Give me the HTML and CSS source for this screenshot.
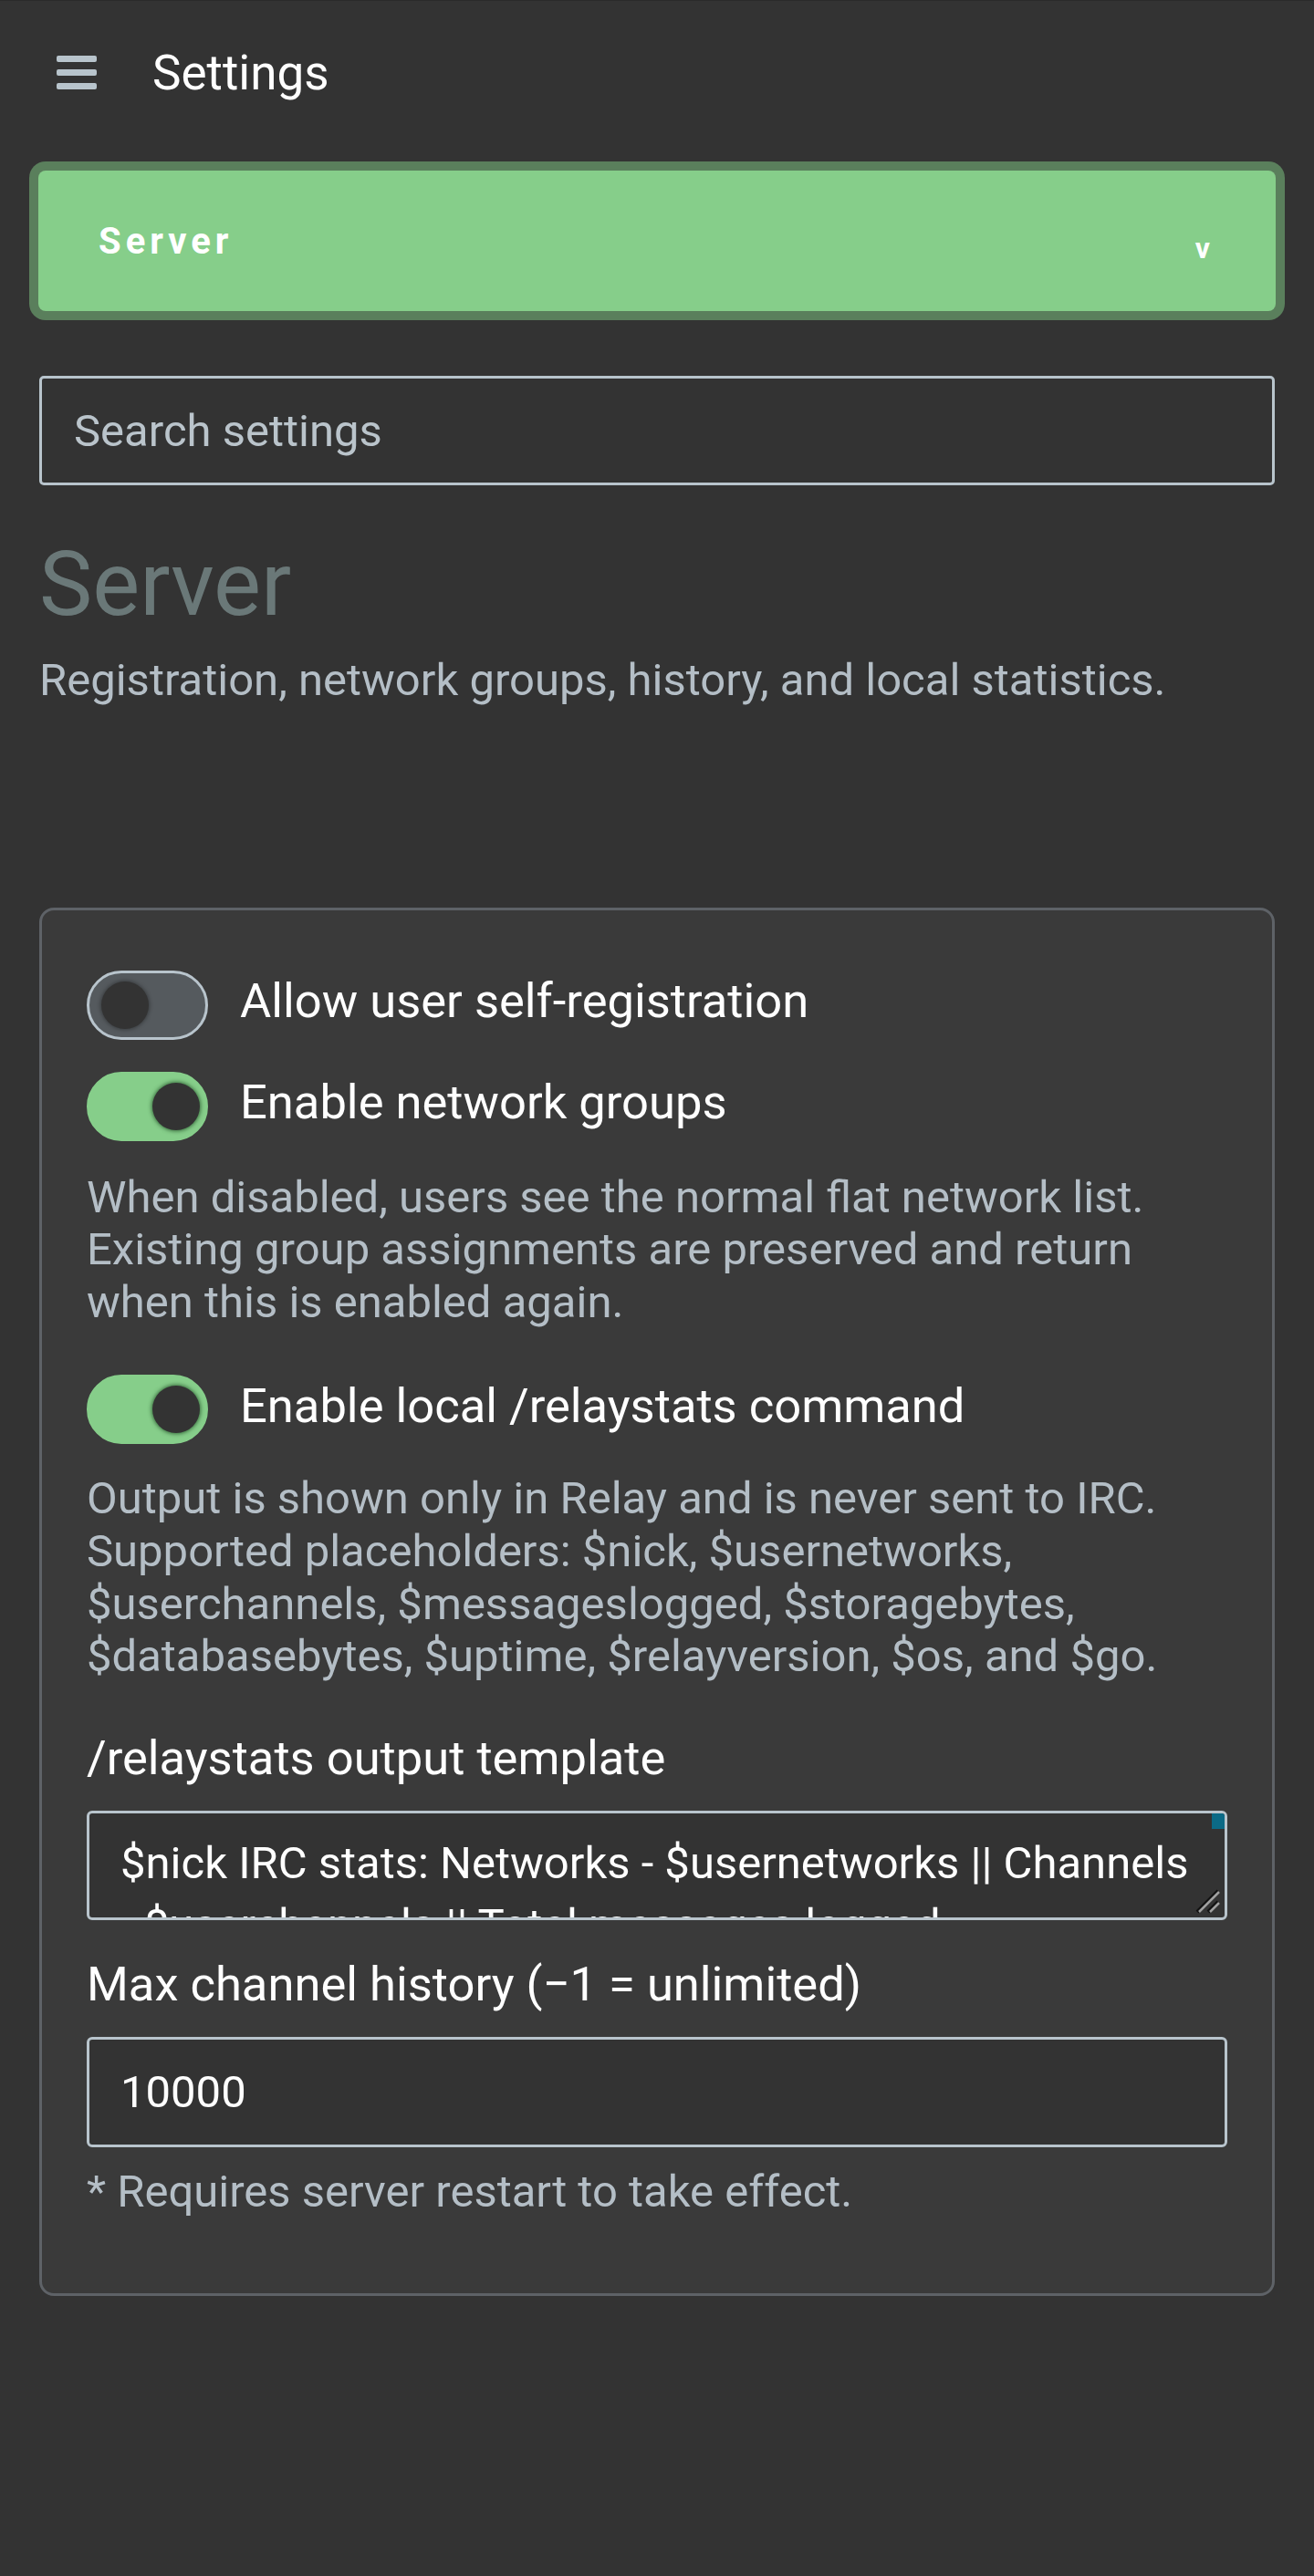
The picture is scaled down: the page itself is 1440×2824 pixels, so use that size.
FILE: index.html
```html
<!DOCTYPE html>
<html lang="en">
<head>
    <meta charset="UTF-8">
    <meta name="viewport" content="width=device-width, initial-scale=1.0">
    <title>Settings</title>
    <link rel="stylesheet" href="styles.css">
</head>
<body>

<header class="topbar">
    <button class="menu-btn" aria-label="Menu">
        <span></span>
        <span></span>
        <span></span>
    </button>
    <h1>Settings</h1>
</header>

<main class="content">
    <button class="section-picker">
        <span class="picker-label">Server</span>
        <span class="picker-chev">v</span>
    </button>

    <input class="search" type="text" placeholder="Search settings">

    <h2 class="section-title">Server</h2>
    <p class="section-desc">Registration, network groups, history, and local statistics.</p>

    <div class="card">
        <label class="toggle-row">
            <span class="toggle"><span class="knob"></span></span>
            <span class="toggle-text">Allow user self-registration</span>
        </label>

        <label class="toggle-row second">
            <span class="toggle on"><span class="knob"></span></span>
            <span class="toggle-text">Enable network groups</span>
        </label>
        <p class="help">When disabled, users see the normal flat network list. Existing group assignments are preserved and return when this is enabled again.</p>

        <label class="toggle-row spaced">
            <span class="toggle on"><span class="knob"></span></span>
            <span class="toggle-text">Enable local /relaystats command</span>
        </label>
        <p class="help">Output is shown only in Relay and is never sent to IRC. Supported placeholders: $nick, $usernetworks, $userchannels, $messageslogged, $storagebytes, $databasebytes, $uptime, $relayversion, $os, and $go.</p>

        <div class="field-label spaced">/relaystats output template</div>
        <div class="template-wrap">
            <textarea class="template">$nick IRC stats: Networks - $usernetworks || Channels - $userchannels || Total messages logged - $messageslogged || Storage used - $storagebytes || Database size - $databasebytes || Uptime - $uptime || Relay $relayversion running on $os with $go</textarea>
            <span class="scroll-thumb"></span>
            <svg class="grip" width="30" height="30" viewBox="0 0 30 30">
                <path d="M4 27 L27 4 M16 27 L27 16" stroke="#111" stroke-width="4" fill="none"/>
                <path d="M6 27 L28 5 M18 27 L28 17" stroke="#a0a0a0" stroke-width="2.5" fill="none"/>
            </svg>
        </div>

        <div class="field-label history">Max channel history (&minus;1 = unlimited)</div>
        <input class="number" type="text" value="10000">
        <p class="help note">* Requires server restart to take effect.</p>
    </div>
</main>

</body>
</html>
```

FILE: styles.css
```css
body {
    margin: 0;
    background-color: #333333;
    font-family: Roboto, 'Noto Sans', Arial, sans-serif;
    color: white;
}

/* Top bar */
.topbar {
    height: 157px;
    display: flex;
    align-items: center;
    padding-left: 62px;
    border-top: 1px solid #2a2a2a;
}

.menu-btn {
    background: none;
    border: none;
    padding: 0;
    width: 44px;
    display: flex;
    flex-direction: column;
    gap: 8px;
    cursor: pointer;
}

.menu-btn span {
    display: block;
    height: 7px;
    border-radius: 2px;
    background-color: #b8c4cc;
}

.topbar h1 {
    margin: 0 0 0 61px;
    font-size: 53px;
    font-weight: 400;
    line-height: 62px;
}

.content {
    padding: 0 43px;
}

/* Section picker */
.section-picker {
    display: flex;
    align-items: center;
    justify-content: space-between;
    width: calc(100% + 2px);
    height: 154px;
    margin: 29px -1px 0;
    padding: 0 72px 0 66px;
    box-sizing: border-box;
    background-color: #86ce8a;
    border: none;
    border-radius: 8px;
    box-shadow: 0 0 0 10px #5a7f5c;
    font-family: inherit;
    color: white;
}

.picker-label {
    font-size: 40px;
    font-weight: 700;
    letter-spacing: 5px;
}

.picker-chev {
    font-size: 32px;
    font-weight: 700;
    margin-top: 16px;
}

.search {
    display: block;
    width: 100%;
    height: 120px;
    margin-top: 71px;
    padding: 0 35px;
    box-sizing: border-box;
    background-color: transparent;
    border: 3px solid #b8c4cc;
    border-radius: 5px;
    font-family: inherit;
    font-size: 49px;
    color: white;
}

.search::placeholder {
    color: #bac4cb;
}

.section-title {
    margin: 51px 0 0;
    font-size: 98px;
    font-weight: 400;
    line-height: 115px;
    color: #6a7878;
}

.section-desc {
    margin: 19px 0 0;
    font-size: 49px;
    line-height: 57.6px;
    color: #b4bec6;
}

/* Card */
.card {
    margin-top: 220px;
    padding: 66px 49px 83px;
    background-color: #3a3a3a;
    border: 3px solid #5e6267;
    border-radius: 16px;
}

.toggle-row {
    display: flex;
    align-items: center;
    gap: 35px;
    cursor: pointer;
}

.toggle-row.second {
    margin-top: 35px;
}

.toggle-row.spaced {
    margin-top: 51px;
}

.toggle {
    position: relative;
    flex: none;
    width: 133px;
    height: 76px;
    box-sizing: border-box;
    border: 3px solid #b8c4cc;
    border-radius: 38px;
    background-color: #555a5e;
}

.toggle.on {
    border-color: #86ce8a;
    background-color: #86ce8a;
}

.knob {
    position: absolute;
    top: 9px;
    left: 13px;
    width: 52px;
    height: 52px;
    border-radius: 50%;
    background-color: #333333;
    box-shadow: 0 0 4px 1px rgba(0, 0, 0, 0.35);
}

.toggle.on .knob {
    left: 69px;
    box-shadow: 0 0 4px 1px rgba(20, 60, 25, 0.7);
}

.toggle-text {
    font-size: 52.5px;
    line-height: 62.4px;
    padding-bottom: 8px;
}

.help {
    margin: 33px 0 0;
    font-size: 49px;
    line-height: 57.6px;
    color: #b4bec6;
}

.toggle-row.spaced + .help {
    margin-top: 31px;
}

.help.note {
    margin-top: 20px;
}

.field-label {
    font-size: 52.5px;
    line-height: 62.4px;
}

.field-label.spaced {
    margin-top: 51px;
}

.field-label.history {
    margin-top: 39px;
}

.template,
.number {
    display: block;
    width: 100%;
    box-sizing: border-box;
    background-color: #333333;
    border: 3px solid #b8c4cc;
    border-radius: 6px;
    font-family: inherit;
    font-size: 49px;
    color: white;
}

/* textarea with its scrollbar thumb and grip drawn over it */
.template-wrap {
    position: relative;
    margin-top: 27px;
}

.template {
    height: 120px;
    padding: 21px 16px 21px 34px;
    line-height: 68px;
    overflow: hidden;
    resize: none;
}

.scroll-thumb {
    position: absolute;
    top: 3px;
    right: 3px;
    width: 14px;
    height: 17px;
    border-top-right-radius: 3px;
    background-color: #0b6a86;
}

.grip {
    position: absolute;
    right: 7px;
    bottom: 6px;
}

.number {
    height: 121px;
    margin-top: 26px;
    padding: 0 34px;
}
```
